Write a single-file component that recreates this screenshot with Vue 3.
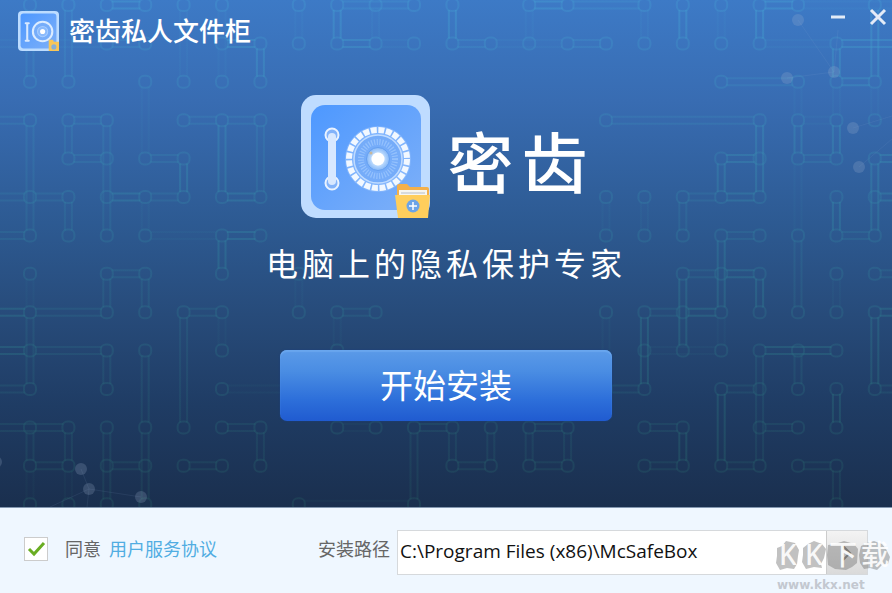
<script setup>
import { ref } from 'vue'

const agreed = ref(true)
const installPath = ref('C:\\Program Files (x86)\\McSafeBox')

// Circuit grid of the backdrop: one cell is 38.4 units
const cell = 38.4
const gx = c => 30 + c * cell
const gy = r => 5 + r * cell

// [col, row, col, row, strength]
const tracks = [
	[0, 0, 0, 2, 1], [1, 0, 1, 2, 1], [2, 0, 3, 0, 2], [2, 1, 3, 1, 1], [5, 1, 6, 1, 2], [-1, 1, 2, 1, 0],
	[5, 0, 5, 2, 0], [6, 1, 6, 2, 2], [4, 0, 4, 2, 0], [3, 2, 3, 4, 0],
	[-1, 3, 0, 3, 1], [1, 3, 2, 3, 1], [4, 3, 5, 3, 1], [5, 3, 6, 3, 1], [1, 4, 2, 4, 1], [3, 4, 4, 4, 1],
	[-1, 5, 0, 5, 1], [0, 5, 1, 5, 1], [2, 5, 3, 5, 2], [3, 5, 4, 5, 1], [5, 5, 6, 5, 2],
	[-1, 6, 0, 6, 1], [5, 6, 6, 6, 2], [2, 7, 3, 7, 1], [3, 6, 5, 6, 0],
	[0, 3, 0, 6, 1], [1, 3, 1, 4, 1], [2, 3, 2, 6, 1], [4, 4, 4, 5, 2], [5, 3, 5, 5, 2], [6, 3, 6, 5, 1],
	[1, 5, 1, 6, 1], [5, 6, 5, 7, 2], [3, 5, 3, 6, 0], [0, 7, 0, 8, 0],
	[-1, 8, 0, 8, 2], [0, 8, 2, 8, 1], [4, 8, 5, 8, 1], [-1, 9, 0, 9, 2], [0, 9, 2, 9, 1], [-1, 10, 0, 10, 1],
	[-1, 11, 1, 11, 1], [5, 11, 6, 11, 1], [0, 12, 1, 12, 1], [2, 12, 3, 12, 1], [4, 12, 5, 12, 1], [5, 10, 7, 10, 0],
	[2, 7, 2, 8, 1], [3, 7, 3, 8, 1], [0, 8, 0, 10, 1], [2, 9, 2, 10, 1], [4, 8, 4, 11, 1], [3, 9, 3, 11, 1],
	[0, 11, 0, 12, 1], [1, 11, 1, 12, 1], [2, 11, 2, 13, 1], [3, 11, 3, 13, 1], [6, 11, 6, 12, 1], [5, 8, 5, 9, 0],
	[0, 12, 0, 13, 0], [1, 12, 1, 13, 0],
	[8, 0, 8, 1, 2], [8, 0, 10, 0, 1], [8, 1, 9, 1, 2], [9, 1, 10, 1, 0], [11, 0, 11, 1, 2], [11, 1, 12, 1, 1],
	[12, 1, 14, 1, 0], [13, 0, 14, 0, 2], [7, 0, 7, 1, 0], [9, 0, 9, 1, 0], [13, 0, 13, 1, 0],
	[14, 0, 16, 0, 1], [14, 1, 15, 1, 1], [17, 0, 17, 1, 2], [19, 0, 20, 0, 2], [19, 0, 19, 1, 2],
	[16, 0, 16, 1, 0], [18, 0, 18, 1, 0], [19, 1, 21, 1, 0], [20, 0, 23, 0, 0],
	[22, 0, 22, 2, 2], [21, 1, 23, 1, 2], [21, 1, 21, 2, 2], [21, 2, 22, 2, 2], [18, 2, 20, 2, 1],
	[15, 3, 19, 3, 1], [19, 3, 19, 5, 2], [18, 4, 19, 4, 2], [18, 4, 18, 5, 2], [18, 5, 19, 5, 2],
	[20, 3, 21, 3, 0], [20, 3, 20, 4, 2], [21, 3, 21, 4, 2], [20, 4, 21, 4, 1], [20, 4, 20, 6, 0], [20, 2, 20, 3, 0],
	[22, 4, 23, 4, 2], [22, 5, 23, 5, 2], [22, 4, 22, 6, 2], [21, 5, 21, 6, 2], [21, 6, 22, 6, 1], [21, 2, 21, 3, 0],
	[17, 5, 18, 5, 1], [17, 5, 17, 6, 1], [15, 5, 15, 6, 0], [16, 5, 16, 6, 0], [18, 6, 19, 6, 1], [22, 2, 22, 3, 0],
	[17, 7, 18, 7, 1], [18, 7, 19, 7, 2], [17, 7, 17, 9, 2], [18, 6, 18, 8, 2], [18, 8, 18, 9, 0], [19, 7, 19, 8, 2],
	[20, 6, 20, 8, 1], [16, 8, 17, 8, 1], [17, 8, 18, 8, 2], [16, 8, 16, 10, 2], [16, 9, 18, 9, 0], [15, 10, 16, 10, 1],
	[22, 7, 23, 7, 1], [22, 8, 23, 8, 2], [22, 8, 22, 10, 2], [22, 10, 23, 10, 1], [21, 7, 21, 8, 0],
	[19, 9, 21, 9, 2], [19, 9, 19, 12, 1], [20, 9, 20, 10, 1], [18, 10, 19, 10, 1], [18, 10, 18, 12, 2],
	[19, 11, 20, 11, 1], [21, 10, 21, 11, 2], [16, 11, 17, 11, 1], [17, 11, 17, 12, 2], [16, 12, 17, 12, 1],
	[18, 12, 19, 12, 1], [20, 12, 21, 12, 1], [21, 12, 21, 13, 1], [15, 8, 15, 10, 0],
	[7, 7, 7, 8, 0], [8, 8, 9, 8, 1], [8, 8, 8, 9, 0], [8, 11, 9, 11, 0], [10, 11, 11, 11, 1],
	[10, 11, 10, 13, 1], [11, 11, 11, 12, 1], [11, 12, 12, 12, 1], [12, 11, 12, 12, 1],
	[13, 11, 14, 11, 1], [13, 11, 13, 12, 1], [14, 11, 14, 12, 1], [13, 12, 14, 12, 1], [7, 13, 10, 13, 0]
]

// Every end point of a track gets one ring
const joints = [...new Set(tracks.flatMap(t => [`${t[0]},${t[1]}`, `${t[2]},${t[3]}`]))]
	.map(key => key.split(',').map(Number))

function trackPath([c1, r1, c2, r2]) {
	const x1 = gx(c1), y1 = gy(r1), x2 = gx(c2), y2 = gy(r2)
	if (r1 === r2) {
		return `M${x1 + 5} ${y1 - 3.5}H${x2 - 5}M${x1 + 5} ${y1 + 3.5}H${x2 - 5}`
	}
	return `M${x1 - 3.5} ${y1 + 5}V${y2 - 5}M${x1 + 3.5} ${y1 + 5}V${y2 - 5}`
}

const dots = [
	[798, 20], [787, 78], [834, 72], [853, 128], [859, 167],
	[81, 469], [89, 489], [141, 497], [-4, 462]
]
</script>

<template>
	<div class="installer">
		<svg width="0" height="0" class="defs" aria-hidden="true">
			<defs>
				<linearGradient id="safe-face" x1="0" y1="0" x2="1" y2="1">
					<stop offset="0" stop-color="#4d98ff" />
					<stop offset="1" stop-color="#7eb0f8" />
				</linearGradient>
				<radialGradient id="safe-core">
					<stop offset="0.4" stop-color="#fff" />
					<stop offset="0.6" stop-color="#b8d8fd" />
					<stop offset="1" stop-color="#86b8f8" />
				</radialGradient>
				<symbol id="safe" viewBox="0 0 129 123">
					<rect width="129" height="123" rx="15" fill="#bfdcff" />
					<rect x="10" y="10" width="110" height="105" rx="14" fill="url(#safe-face)" />
					<circle cx="31" cy="40" r="6.5" fill="#83b3fa" stroke="#eaf3ff" stroke-width="2" />
					<circle cx="31" cy="88" r="6.5" fill="#83b3fa" stroke="#eaf3ff" stroke-width="2" />
					<rect x="27" y="38" width="8" height="52" rx="4" fill="#d8e8ff" />
					<circle cx="77" cy="64" r="33" fill="#9cc5ff" opacity="0.5" />
					<circle cx="77" cy="64" r="29" fill="none" stroke="#f2f8ff" stroke-width="6" stroke-dasharray="6 1.6" />
					<circle cx="77" cy="64" r="24" fill="#75acf9" stroke="#bfdbff" stroke-width="1.5" />
					<circle cx="77" cy="64" r="17" fill="none" stroke="#94c1fd" stroke-width="6" stroke-dasharray="1.2 1.5" />
					<circle cx="77" cy="64" r="11.5" fill="url(#safe-core)" stroke="#649ff0" />
					<circle cx="77" cy="64" r="6.5" fill="#fff" />
					<circle cx="70" cy="58" r="1.5" fill="#c6b79c" />
					<path d="M96 105V91q0-2 2-2h8l3 3h17q2 0 2 2v12z" fill="#f4b04b" />
					<path d="M98 95h28v11H98z" fill="#f7f6ef" />
					<path d="M100 97h24v2h-24z" fill="#d7dadb" />
					<path d="M94 100h35l-2 23H97z" fill="#ffce5c" />
					<circle cx="112" cy="111" r="6.5" fill="#6ca4e8" />
					<path d="M112 107v8M108 111h8" stroke="#fff" stroke-width="1.5" />
				</symbol>
				<symbol id="safe-small" viewBox="0 0 40 39">
					<rect width="40" height="39" rx="4" fill="#bcdcff" />
					<rect x="2.5" y="2.5" width="35" height="34" rx="3" fill="url(#safe-face)" />
					<path d="M9 12v17M7.5 12h3M7.5 29h3" stroke="#d8e9ff" stroke-width="2" fill="none" stroke-linecap="round" />
					<circle cx="24" cy="20" r="9.5" fill="#76adfa" stroke="#dcecff" stroke-width="2" />
					<circle cx="24" cy="20" r="5" fill="#8abafc" stroke="#a5ccff" />
					<circle cx="24" cy="20" r="2.5" fill="#fff" />
					<path d="M30 28h4l1 2h5v9H30z" fill="#f8c658" />
					<circle cx="35" cy="35" r="2.5" fill="#86afd8" />
				</symbol>
			</defs>
		</svg>

		<main class="hero">
			<svg class="backdrop" viewBox="0 0 892 507" preserveAspectRatio="xMidYMid slice" aria-hidden="true">
				<defs>
					<linearGradient id="circuit-ink" gradientUnits="userSpaceOnUse" x1="0" y1="0" x2="0" y2="507">
						<stop offset="0" stop-color="#45a1d4" />
						<stop offset="0.5" stop-color="#30819c" />
						<stop offset="1" stop-color="#266064" />
					</linearGradient>
				</defs>
				<g fill="none" stroke="url(#circuit-ink)" stroke-width="2">
					<path v-for="(t, i) in tracks" :key="i" :d="trackPath(t)" :class="'track-' + t[4]" />
					<rect
						v-for="([c, r], i) in joints"
						:key="'j' + i"
						:x="gx(c) - 6"
						:y="gy(r) - 6"
						width="12"
						height="12"
						rx="5"
						class="joint"
					/>
				</g>
				<g fill="none" stroke="#8fb0dc" opacity="0.1">
					<path d="M798 20l36 52M787 78l47-6M838 30l-4 42M853 128l39-12M859 167l33-28" />
					<path d="M81 469l8 20 52 8M89 489l-39 18M89 489l-2 18" />
				</g>
				<circle v-for="([x, y], i) in dots" :key="'d' + i" :cx="x" :cy="y" r="6" class="dot" />
			</svg>

			<header class="titlebar">
				<svg class="title-logo" aria-hidden="true"><use href="#safe-small" /></svg>
				<h1 class="title">密齿私人文件柜</h1>
				<div class="window-actions">
					<button type="button" class="window-btn" aria-label="最小化">
						<svg viewBox="0 0 18 18"><path d="M2 9h14" stroke-width="3" /></svg>
					</button>
					<button type="button" class="window-btn" aria-label="关闭">
						<svg viewBox="0 0 18 18"><path d="M2 2l14 14M16 2L2 16" stroke-width="3" /></svg>
					</button>
				</div>
			</header>

			<div class="brand">
				<svg class="brand-logo" aria-hidden="true"><use href="#safe" /></svg>
				<h2 class="brand-name">密齿</h2>
			</div>
			<p class="slogan">电脑上的隐私保护专家</p>
			<button type="button" class="install-btn" :disabled="!agreed">开始安装</button>
		</main>

		<footer class="footer">
			<input id="agree" v-model="agreed" type="checkbox" class="agree-box" />
			<label for="agree" class="agree-label">同意</label>
			<a href="#" class="agreement">用户服务协议</a>

			<label for="path" class="path-label">安装路径</label>
			<div class="path-field">
				<input id="path" v-model="installPath" type="text" class="path-input" />
				<button type="button" class="browse-btn" aria-label="浏览">
					<svg viewBox="0 0 12 18"><path d="M2 2l7 7-7 7" /></svg>
				</button>
			</div>

			<svg class="watermark" viewBox="0 -14 116 70" aria-hidden="true">
				<g class="stamp">
					<path d="M2 11l5-2 4-5 9 2 4 7-1 6-1 8-3 5-7-1-7 2-4-7 1-7z" />
					<path d="M28 11l5-4 6-3 8 3 4 5-2 9-3 6 1 4-8-1-8 2-4-7 1-7z" />
					<path d="M53 8l7-1 9-3 10 3 4 5-1 14-5 4-6 3-11-1-7-4-1-10z" />
					<path d="M86 9l6-3 7-2 8 3 4 5 4 8-2 7-6 1-5 5-7-2-6 1-4-6-1-8z" />
				</g>
				<g class="stamp-text">
					<text x="4" y="28">K</text>
					<text x="30" y="28">K</text>
					<text x="54" y="28">下</text>
					<text x="86" y="28">载</text>
				</g>
				<text x="2" y="52" class="stamp-url">www.kkx.net</text>
			</svg>
		</footer>
	</div>
</template>

<style>
body {
	background: #eff7ff;
}
</style>

<style scoped>
.installer {
	font-family: "Noto Sans", "Noto Sans CJK SC", sans-serif;
	min-height: 100vh;
	display: flex;
	flex-direction: column;
	background: #eff7ff;
}

.defs {
	position: absolute;
}

.hero {
	position: relative;
	display: flex;
	flex-direction: column;
	align-items: center;
	padding-bottom: 86px;
	border-bottom: 1px solid #8397b0;
	color: #fff;
	background: linear-gradient(#3d7ac6 0%, #386cb2 20%, #2d5a92 44%, #274b7a 62%, #1f3c64 80%, #1a2f4e 100%);
}

.backdrop {
	position: absolute;
	inset: 0;
	width: 100%;
	height: 100%;
}

.track-0 {
	opacity: 0.1;
}

.track-1 {
	opacity: 0.24;
}

.track-2 {
	opacity: 0.4;
}

.joint {
	opacity: 0.3;
}

.dot {
	fill: #a5b4d0;
	opacity: 0.22;
}

.titlebar,
.brand,
.slogan,
.install-btn {
	position: relative;
}

.titlebar {
	align-self: stretch;
	display: flex;
	align-items: center;
	padding: 11px 4px 0 18px;
}

.title-logo {
	width: 41px;
	height: 40px;
	margin-right: 10px;
}

.title {
	margin: 0;
	font-size: 26px;
	line-height: 40px;
	font-weight: 500;
}

.window-actions {
	display: flex;
	gap: 20px;
	align-self: flex-start;
	margin-top: -4px;
	margin-left: auto;
}

.window-btn {
	width: 20px;
	height: 20px;
	padding: 1px;
	border: none;
	background: transparent;
	cursor: pointer;
}

.window-btn svg {
	display: block;
	width: 18px;
	height: 18px;
	fill: none;
	stroke: #e3ebf7;
}

.brand {
	display: flex;
	align-items: center;
	gap: 18px;
	margin-top: 44px;
	padding-left: 4px;
}

.brand-logo {
	width: 129px;
	height: 123px;
}

.brand-name {
	margin: 0;
	padding-top: 10px;
	font-size: 66px;
	line-height: 96px;
	font-weight: 500;
	letter-spacing: 8px;
}

.slogan {
	margin: 24px 0 0;
	font-size: 32px;
	line-height: 44px;
	letter-spacing: 4px;
}

.install-btn {
	width: 332px;
	height: 71px;
	margin-top: 64px;
	padding-bottom: 4px;
	border: none;
	border-radius: 7px;
	color: #fff;
	font-family: inherit;
	font-size: 33px;
	background: linear-gradient(#5b9ae8 0%, #4a8de3 30%, #2d6fda 70%, #205bd0 100%);
	box-shadow: inset 0 2px 1px #69a6ee, 0 0 2px #1b4280;
	cursor: pointer;
}

.footer {
	position: relative;
	display: flex;
	align-items: flex-start;
	padding: 22px 24px 18px;
	font-size: 18px;
	line-height: 38px;
	color: #666;
}

.agree-box {
	appearance: none;
	width: 24px;
	height: 24px;
	margin: 7px 17px 0 0;
	border: 1px solid #ccc;
	background: #fff;
}

.agree-box:checked {
	background: #fff url("data:image/svg+xml,%3Csvg xmlns='http://www.w3.org/2000/svg' viewBox='0 0 22 22'%3E%3Cpath d='M4 11l5 5L19 5' fill='none' stroke='%2369ad22' stroke-width='3'/%3E%3C/svg%3E");
}

.agree-label {
	margin-right: 8px;
}

.agreement {
	color: #51ade2;
	text-decoration: none;
}

.path-label {
	margin-left: 101px;
	margin-right: 7px;
}

.path-field {
	flex: 1;
	display: flex;
	height: 45px;
	box-sizing: border-box;
	border: 1px solid #d6d9dc;
	background: #fff;
}

.path-input {
	flex: 1;
	min-width: 0;
	padding: 0 2px 4px;
	border: none;
	outline: none;
	background: transparent;
	font-family: "Open Sans", "Noto Sans", sans-serif;
	font-size: 19px;
	color: #111;
}

.browse-btn {
	display: flex;
	align-items: center;
	justify-content: center;
	width: 41px;
	padding: 0;
	border: none;
	border-left: 1px solid #ccc;
	background: linear-gradient(#f3f3f3, #dadada);
}

.browse-btn svg {
	width: 12px;
	height: 18px;
	fill: none;
	stroke: #777;
	stroke-width: 2;
}

.watermark {
	position: absolute;
	right: 1px;
	bottom: 0;
	width: 116px;
	height: 70px;
	pointer-events: none;
}

.stamp {
	fill: #777;
	opacity: 0.45;
}

.stamp-text {
	fill: #fff;
	opacity: 0.9;
	font-size: 28px;
	font-weight: 500;
}

.stamp-url {
	fill: #c3c8d0;
	font-family: "DejaVu Sans", sans-serif;
	font-size: 12px;
	font-weight: bold;
}
</style>
